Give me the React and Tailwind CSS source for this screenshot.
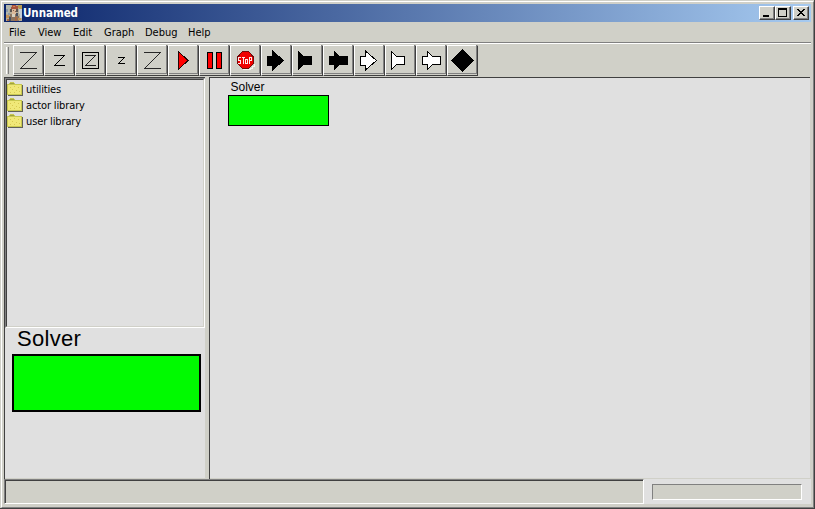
const tahoma = "font-['DejaVu_Sans_Condensed','DejaVu_Sans',sans-serif] [font-stretch:condensed]";

function AppIcon() {
  return (
    <svg width="16" height="16" viewBox="0 0 16 16" shapeRendering="crispEdges">
      <rect width="16" height="16" fill="#b4ac98" />
      <path d="M0 0h5v4H3v5H0z" fill="#b4b8ac" />
      <path d="M0 4h2v3H0zM2 8h2v2H2z" fill="#8c9aa8" />
      <path d="M12 0h4v4h-3V3h-1z" fill="#b89c50" />
      <path d="M13 4h3v9h-2V9h-1z" fill="#c4ccd4" />
      <path d="M6 0h4v1h2v3H5V2h1z" fill="#a8543c" />
      <path d="M7 1h2v1H7z" fill="#d88058" />
      <path d="M4 4h3v3H4zM10 4h2v3h-2z" fill="#5c5450" />
      <path d="M6 4h4v5H6z" fill="#dcb898" />
      <path d="M7 5h1v1H7zM9 6h1v1H9z" fill="#84604c" />
      <path d="M4 9h8v2h1v5H3v-5h1z" fill="#8c7460" />
      <path d="M6 9h3v3H6z" fill="#d8d0c0" />
      <path d="M10 8h2v3h-2zM3 12h2v4H3z" fill="#485060" />
      <path d="M0 10h3v3H0zM12 13h3v2h-3z" fill="#c49458" />
      <path d="M9 12h2v4H9zM1 14h2v2H1z" fill="#a86844" />
    </svg>
  );
}

function Folder() {
  return (
    <svg width="16" height="14" viewBox="0 0 16 14" shapeRendering="crispEdges">
      <path d="M15 3h1v11H1v-1h14z" fill="#606058" />
      <path d="M2 1h1V0h4v1h1v1h7v11H0V2h2z" fill="#c8c850" />
      <path d="M3 1h4v1H3z" fill="#a0a040" />
      <path d="M1 3h13v9H1z" fill="#f0e878" />
      <path d="M3 5h1v1H3zM7 4h1v1H7zM11 5h1v1h-1zM5 7h1v1H5zM9 8h1v1H9zM12 9h1v1h-1zM3 10h1v1H3zM7 10h1v1H7z" fill="#d8c850" />
    </svg>
  );
}

function Raised({ children }) {
  return (
    <div className="h-[31px] w-[31px] border border-b-[#404040] border-l-white border-r-[#404040] border-t-white">
      <div className="h-full w-full border-b border-r border-[#808080]">
        <svg width="31" height="31" viewBox="0 0 31 31" className="-ml-px -mt-px block max-w-none overflow-visible" shapeRendering="crispEdges">
          {children}
        </svg>
      </div>
    </div>
  );
}

const bigZ = <path d="M7 7.5h17M7 23.5h17M23.5 7.5L7.5 23.5" fill="none" stroke="#282828" />;
const black = { fill: "#000", stroke: "#000" };
const white = { fill: "#fff", stroke: "#000" };
const rightArrow = "M6.5 11.5H11.5V6L22.5 15.5L11.5 25V20.5H6.5Z";
const flare = "M6.5 6.5L11.5 11.5H19.5V19.5H11.5L6.5 24.5Z";
const notched = "M6.5 11.5H11.5V6.5L16.5 11.5H24.5V19.5H16.5L11.5 24.5V19.5H6.5Z";

const tools = [
  bigZ,
  <path d="M10 10.5h11M10 20.5h11M20.5 10.5L10.5 20.5" fill="none" stroke="#000" />,
  <g fill="none" stroke="#000">
    <path d="M7.5 7.5h16v16h-16z" />
    <path d="M10 10.5h11M10 20.5h11M20.5 10.5L10.5 20.5" stroke="#202020" />
  </g>,
  <path d="M12 12.5h7M12 18.5h7M18.5 12.5L12.5 18.5" fill="none" stroke="#000" />,
  bigZ,
  <path d="M10.5 6.5L20 15.5L10.5 24.5Z" fill="#f00" stroke="#200808" />,
  <path d="M8.5 7.5h5v16h-5zM17.5 7.5h5v16h-5z" fill="#f00" stroke="#000" />,
  <g>
    <path d="M13 24h7v-1h2v-2h2v-2" fill="none" stroke="#f4f4f0" />
    <path d="M12.5 6.5h6L23.5 12v6.5L18.5 23.5h-6L7.5 18.5V12Z" fill="#f00000" stroke="#700c0c" />
    <path d="M11 12.5H8.5V15.5H10.5V18.5H8M12 12.5h3M13.5 12.5v6M15.5 14.5h2v4h-2zM19.5 19v-6.5h2v3h-2" fill="none" stroke="#ffe8e8" />
  </g>,
  <path d={rightArrow} {...black} />,
  <path d={flare} {...black} />,
  <path d={notched} {...black} />,
  <path d={rightArrow} {...white} />,
  <path d={flare} {...white} />,
  <path d={notched} {...white} />,
  <path d="M15.5 4L27 15.5L15.5 27L4 15.5Z" fill="#000" />,
];

function CaptionButton({ children }) {
  return (
    <div className="h-[14px] w-4 border border-b-[#404040] border-l-white border-r-[#404040] border-t-white bg-[#d0d0c8]">
      <div className="h-full w-full border-b border-r border-[#808080]">
        <svg width="14" height="12" viewBox="1 1 14 12" className="block max-w-none" shapeRendering="crispEdges">
          {children}
        </svg>
      </div>
    </div>
  );
}

const menus = [
  ["File", "w-[29px]"],
  ["View", "w-[35px]"],
  ["Edit", "w-[31px]"],
  ["Graph", "w-[41px]"],
  ["Debug", "w-[43px]"],
  ["Help", "w-[40px]"],
];

export default function App() {
  return (
    <div className={`flex h-[509px] w-[815px] overflow-hidden border-b border-r border-[#404040] bg-[#d0d0c8] pl-px pt-px text-[11px] text-black ${tahoma}`}>
      <div className="flex w-full flex-col border border-b-[#808080] border-l-white border-r-[#808080] border-t-white p-0.5">
        <div className="flex h-[18px] w-[807px] shrink-0 items-center bg-linear-to-r/srgb from-[#0a246a] to-[#a6caf0] pl-0.5 pr-[2px]">
          <AppIcon />
          <span className="pl-px pt-0.5 text-[11.5px] font-bold tracking-[-0.05px] text-white">Unnamed</span>
          <div className="ml-auto flex">
            <CaptionButton><path d="M4 9h6v2H4z" /></CaptionButton>
            <CaptionButton><path d="M3 2h9v9H3zM4 4v6h7V4z" fillRule="evenodd" /></CaptionButton>
            <div className="ml-0.5">
              <CaptionButton>
                <path d="M4 3h2v1h1v1h2V4h1V3h2v1h-1v1h-1v1H9v1h1v1h1v1h1v1h-2V9H9V8H7v1H6v1H4V9h1V8h1V7h1V6H6V5H5V4H4z" />
              </CaptionButton>
            </div>
          </div>
        </div>

        <div className="flex h-5 shrink-0 items-center pl-[5px] pt-0.5">
          {menus.map(([name, w]) => <span key={name} className={`shrink-0 whitespace-nowrap ${w}`}>{name}</span>)}
        </div>

        <div className="flex h-[35px] w-[807px] shrink-0 border-t border-[#808080]">
          <div className="flex w-full border-t border-white pl-0.5 pt-px">
            <div className="mt-0.5 h-[27px] w-[3px] border-l border-r border-l-white border-r-[#808080]" />
            <div className="ml-1 flex">
              {tools.map((icon, i) => <Raised key={i}>{icon}</Raised>)}
            </div>
          </div>
        </div>

        <div className="flex h-[402px] w-[806px] shrink-0">
          <div className="flex w-[201px] flex-col border-l border-t border-[#404040] bg-[#e0e0e0]">
            <div className="h-[250px] shrink-0 border border-b-white border-l-[#808080] border-r-white border-t-[#808080]">
              <div className="h-full border border-b-[#d0d0c8] border-l-[#404040] border-r-[#d0d0c8] border-t-[#404040] pt-px">
                {["utilities", "actor library", "user library"].map((name) => (
                  <div key={name} className="flex h-4 items-center gap-[3px]">
                    <Folder />
                    <span className="pt-0.5 leading-4 tracking-[-0.13px]">{name}</span>
                  </div>
                ))}
              </div>
            </div>
            <div className="flex flex-1 flex-col border-b border-[#d0d0c8] font-['Liberation_Sans',Arial,sans-serif]">
              <span className="h-[25px] pl-3 text-[22px] leading-[22px] tracking-[0.3px]">Solver</span>
              <div className="ml-[7px] mt-px h-[58px] w-[189px] border-2 border-black bg-[#00fa00]" />
            </div>
          </div>
          <div className="w-1" />
          <div className="flex-1 border-l border-t border-[#404040]">
            <div className="h-full border-b border-[#d0d0c8] bg-[#e0e0e0] pl-[18px] font-['Liberation_Sans',Arial,sans-serif]">
              <div className="h-[17px] pl-[2.5px] text-[12px] leading-[18px]">Solver</div>
              <div className="h-[31px] w-[101px] border border-black bg-[#00fa00]" />
            </div>
          </div>
        </div>

        <div className="flex h-[25px] w-[807px] shrink-0 bg-[#e0e0e0]">
          <div className="w-[640px] border border-b-white border-l-[#808080] border-r-white border-t-[#808080] bg-[#d0d0c8]">
            <div className="h-full border-l border-t border-[#404040]" />
          </div>
          <div className="ml-2 mt-[5px] h-4 w-[150px] border border-b-white border-l-[#808080] border-r-white border-t-[#808080] bg-[#d0d0c8]" />
        </div>
      </div>
    </div>
  );
}
